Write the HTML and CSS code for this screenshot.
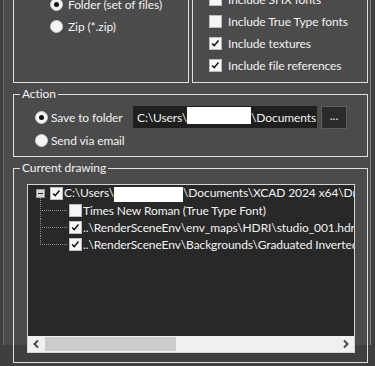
FILE: index.html
```html
<!DOCTYPE html>
<html lang="en">
<head>
    <meta charset="UTF-8">
    <meta name="viewport" content="width=device-width, initial-scale=1.0">
    <title>Pack and Go</title>
    <link rel="stylesheet" href="styles.css">
</head>
<body>
    <div class="panel">
        <div class="top-row">
            <div class="group format-group">
                <div class="opt"><span class="radio on"></span>Folder (set of files)</div>
                <div class="opt"><span class="radio"></span>Zip (*.zip)</div>
            </div>
            <div class="group options-group">
                <div class="opt"><span class="check"></span>Include SHX fonts</div>
                <div class="opt"><span class="check"></span>Include True Type fonts</div>
                <div class="opt"><span class="check"><svg viewBox="0 0 13 13"><path d="M2.5 6.5l2.5 2.5 5-6"/></svg></span>Include textures</div>
                <div class="opt"><span class="check"><svg viewBox="0 0 13 13"><path d="M2.5 6.5l2.5 2.5 5-6"/></svg></span>Include file references</div>
            </div>
        </div>

        <fieldset class="box action-box">
            <legend>Action</legend>
            <div class="action-body">
                <div class="action-row">
                    <div class="opt opt-tight folder-opt"><span class="radio on"></span>Save to folder</div>
                    <div class="path-field">C:\Users\<span class="redact"></span>\Documents</div>
                    <button class="browse" type="button">...</button>
                </div>
                <div class="opt opt-tight email-opt"><span class="radio"></span>Send via email</div>
            </div>
        </fieldset>

        <fieldset class="box drawing-box">
            <legend>Current drawing</legend>
            <div class="drawing-body">
                <div class="tree">
                    <div class="tree-list">
                        <div class="node root">
                            <span class="expander"><span class="minus"></span></span>
                            <span class="check"><svg viewBox="0 0 13 13"><path d="M2.5 6.5l2.5 2.5 5-6"/></svg></span>
                            <span class="node-text">C:\Users\<span class="redact redact-tree"></span>\Documents\XCAD 2024 x64\Drawings\Sample.dwg</span>
                        </div>
                        <div class="node child">
                            <span class="branch"></span>
                            <span class="check"></span>
                            <span class="node-text">Times New Roman (True Type Font)</span>
                        </div>
                        <div class="node child">
                            <span class="branch"></span>
                            <span class="check"><svg viewBox="0 0 13 13"><path d="M2.5 6.5l2.5 2.5 5-6"/></svg></span>
                            <span class="node-text">..\RenderSceneEnv\env_maps\HDRI\studio_001.hdr</span>
                        </div>
                        <div class="node child last">
                            <span class="branch"></span>
                            <span class="check"><svg viewBox="0 0 13 13"><path d="M2.5 6.5l2.5 2.5 5-6"/></svg></span>
                            <span class="node-text">..\RenderSceneEnv\Backgrounds\Graduated Inverted.jpg</span>
                        </div>
                    </div>
                    <div class="hscroll">
                        <span class="scroll-btn"><svg viewBox="0 0 17 16"><path d="M10 4.5L6.5 8l3.5 3.5"/></svg></span>
                        <span class="scroll-track"><span class="scroll-thumb"></span></span>
                        <span class="scroll-btn"><svg viewBox="0 0 17 16"><path d="M7 4.5L10.5 8 7 11.5"/></svg></span>
                    </div>
                </div>
            </div>
        </fieldset>
    </div>
</body>
</html>
```

FILE: styles.css
```css
html, body {
    margin: 0;
    height: 100%;
    overflow: hidden;
}
body {
    background-color: #3f3f3f;
    font-family: Lato, "Noto Sans", sans-serif;
    font-size: 12px;
    letter-spacing: -0.1px;
    color: #f2f2f2;
}
.panel {
    margin-left: 3px;
    width: 355px;
    height: 366px;
    padding: 0 2px 0 9px;
    background-color: #4b4b4b;
    border-left: 1px solid #6a6a6a;
    border-right: 1px solid #8a8a8a;
}

/* top option groups (cut off by the window) */
.top-row {
    display: grid;
    grid-template-columns: minmax(0, 1fr) minmax(0, 1fr);
    gap: 3px;
    margin-top: -21px;
}
.group {
    border: 1px solid #dedede;
    overflow: hidden;
}
.format-group {
    padding: 13px 0 0 36px;
}
.options-group {
    padding: 8px 0 6px 16px;
}
.opt {
    display: flex;
    align-items: center;
    gap: 6px;
    height: 22px;
    white-space: nowrap;
}
.format-group .opt {
    gap: 5px;
}
.opt-tight {
    gap: 3px;
}

.radio {
    box-sizing: border-box;
    width: 13px;
    height: 13px;
    flex: none;
    border-radius: 50%;
    background-color: #f4f4f4;
    border: 1px solid #cfcfcf;
    display: flex;
    align-items: center;
    justify-content: center;
}
.radio.on::after {
    content: "";
    width: 5px;
    height: 5px;
    border-radius: 50%;
    background-color: #111;
}
.check {
    box-sizing: border-box;
    width: 13px;
    height: 13px;
    flex: none;
    background-color: #f6f6f6;
    border: 1px solid #bcbcbc;
}
.check svg {
    display: block;
    width: 11px;
    height: 11px;
}
.check path {
    fill: none;
    stroke: #111;
    stroke-width: 1.8;
}

/* group boxes with a caption */
.box {
    margin: 0;
    padding: 0;
    min-inline-size: 0;
    border: 1px solid #dedede;
}
.box legend {
    margin-left: 6px;
    padding: 0 2px;
    line-height: 16px;
}
.action-box {
    margin-top: 3px;
}
.action-body {
    padding: 4px 0 5px 21px;
}
.action-row {
    display: flex;
    align-items: center;
    gap: 4px;
    height: 22px;
}
.folder-opt {
    width: 94px;
}
.email-opt {
    margin-top: 1px;
}
.path-field {
    box-sizing: border-box;
    width: 184px;
    height: 22px;
    padding: 0 4px;
    display: flex;
    align-items: center;
    background-color: #1f1f1f;
    white-space: nowrap;
    overflow: hidden;
}
.redact {
    display: inline-block;
    width: 64px;
    height: 17px;
    margin-top: -4px;
    background-color: #fff;
    flex: none;
}
.browse {
    box-sizing: border-box;
    width: 26px;
    height: 23px;
    padding: 0 0 4px;
    background-color: #2b2b2b;
    border: 1px solid #5c5c5c;
    color: #f2f2f2;
    font-family: inherit;
    font-size: 12px;
}

/* tree view */
.drawing-box {
    margin-top: 3px;
}
.drawing-body {
    padding: 8px 12px 9px 13px;
}
.tree {
    border: 1px solid #d4d4d4;
}
.tree-list {
    height: 151px;
    background-color: #282828;
    overflow: hidden;
}
.node {
    display: flex;
    align-items: center;
    gap: 1px;
    height: 17px;
    white-space: nowrap;
}
.root {
    padding-left: 8px;
}
.root .expander {
    width: 9px;
    height: 17px;
    margin-right: 4px;
    flex: none;
    display: flex;
    align-items: center;
    background: repeating-linear-gradient(to bottom, #8c8c8c 0 1px, transparent 1px 2px) 4px 13px / 1px 4px no-repeat;
}
.minus {
    box-sizing: border-box;
    width: 9px;
    height: 9px;
    background-color: #d6d6d6;
    border: 1px solid #9a9a9a;
    display: flex;
    align-items: center;
    justify-content: center;
}
.minus::after {
    content: "";
    width: 5px;
    height: 1px;
    background-color: #222;
}
.child {
    padding-left: 12px;
}
.branch {
    width: 28px;
    height: 17px;
    flex: none;
    background:
        repeating-linear-gradient(to bottom, #8c8c8c 0 1px, transparent 1px 2px) 0 0 / 1px 100% no-repeat,
        repeating-linear-gradient(to right, #8c8c8c 0 1px, transparent 1px 2px) 0 8px / 100% 1px no-repeat;
}
.child.last .branch {
    background:
        repeating-linear-gradient(to bottom, #8c8c8c 0 1px, transparent 1px 2px) 0 0 / 1px 9px no-repeat,
        repeating-linear-gradient(to right, #8c8c8c 0 1px, transparent 1px 2px) 0 8px / 100% 1px no-repeat;
}
.redact-tree {
    width: 69px;
    height: 15px;
    margin-top: 0;
    vertical-align: middle;
}

.hscroll {
    display: flex;
    height: 16px;
    background-color: #f0f0f0;
}
.scroll-btn {
    width: 17px;
    flex: none;
}
.scroll-btn svg {
    display: block;
    width: 17px;
    height: 16px;
}
.scroll-btn path {
    fill: none;
    stroke: #4a4a4a;
    stroke-width: 2;
}
.scroll-track {
    flex: 1;
    padding: 1px 0;
}
.scroll-thumb {
    display: block;
    width: 131px;
    height: 14px;
    background-color: #cdcdcd;
}
```
